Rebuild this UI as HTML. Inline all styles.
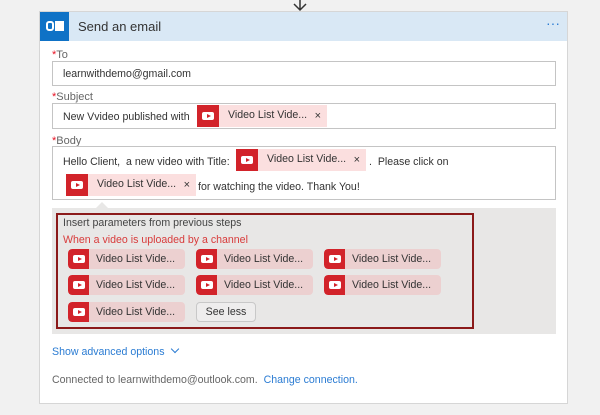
<!DOCTYPE html>
<html><head><meta charset="utf-8"><style>
*{box-sizing:border-box;margin:0;padding:0}
body{width:600px;height:415px;background:#f1f1f1;font-family:"Liberation Sans",sans-serif;position:relative;overflow:hidden;color:#333}
.abs{position:absolute}
.card{left:39px;top:11px;width:529px;height:393px;background:#fff;border:1px solid #d6d6d6}
.hdr{left:0;top:0;width:527px;height:29px;background:#d9e8f5}
.lbl{font-size:11px;color:#666}
.lbl b{color:#e81123;font-weight:normal}
.inp{border:1px solid #c4c4c4;background:#fff;font-size:10.6px;color:#333}
.tok{position:absolute;height:22px;background:#fbdfdf;font-size:10.6px;color:#333;white-space:nowrap}
.yt{position:absolute;left:0;top:0;width:22px;height:22px;background:#d2232a}
.yt:before{content:"";position:absolute;left:5px;top:7px;width:12px;height:8px;background:#fff;border-radius:2px}
.yt:after{content:"";position:absolute;left:10px;top:9px;border-left:4px solid #d2232a;border-top:2px solid transparent;border-bottom:2px solid transparent}
.tok span{position:absolute;left:31px;top:4px}
.tok i{position:absolute;right:6px;top:5px;font-style:normal;font-size:11px}
.pt{position:absolute;width:117px;height:20px;background:#ecd0d0;border-radius:4px;font-size:10.6px;color:#333;overflow:hidden}
.pt .yt{height:20px;width:21px;border-radius:4px 0 0 4px}
.pt .yt:before{top:6px;left:5px}
.pt .yt:after{top:8px}
.pt span{position:absolute;left:28px;top:4px}
</style></head><body>
<svg class="abs" style="left:292px;top:0" width="16" height="12"><path d="M8 0V10M2 4L8 10L14 4" stroke="#333" stroke-width="1.5" fill="none"/></svg>
<div class="abs card">
 <div class="abs hdr"></div>
 <div class="abs" style="left:0;top:0;width:29px;height:29px;background:#0f72c6"></div>
 <div class="abs" style="left:6px;top:9px;width:8px;height:10px;border:2px solid #fff;border-radius:3px"></div>
 <div class="abs" style="left:15px;top:9px;width:9px;height:10px;background:#fff"></div>
 <div class="abs" style="left:38px;top:7px;font-size:13px;color:#333">Send an email</div>
 <div class="abs" style="left:506px;top:3px;font-size:14px;color:#2b7cd3">···</div>
 <div class="abs lbl" style="left:12px;top:37px"><b>*</b>To</div>
 <div class="abs inp" style="left:12px;top:49px;width:504px;height:25px;padding:6px 10px">learnwithdemo@gmail.com</div>
 <div class="abs lbl" style="left:12px;top:79px"><b>*</b>Subject</div>
 <div class="abs inp" style="left:12px;top:91px;width:504px;height:26px">
  <div class="abs" style="left:10px;top:7px">New Vvideo published with</div>
  <div class="tok" style="left:144px;top:1px;width:130px"><div class="yt"></div><span>Video List Vide...</span><i>×</i></div>
 </div>
 <div class="abs lbl" style="left:12px;top:123px"><b>*</b>Body</div>
 <div class="abs inp" style="left:12px;top:134px;width:504px;height:54px">
  <div class="abs" style="left:10px;top:9px;white-space:nowrap">Hello Client,&nbsp; a new video with Title:</div>
  <div class="tok" style="left:183px;top:2px;width:130px"><div class="yt"></div><span>Video List Vide...</span><i>×</i></div>
  <div class="abs" style="left:316px;top:9px;white-space:nowrap">.&nbsp; Please click on</div>
  <div class="tok" style="left:13px;top:27px;width:130px"><div class="yt"></div><span>Video List Vide...</span><i>×</i></div>
  <div class="abs" style="left:145px;top:34px;white-space:nowrap">for watching the video. Thank You!</div>
 </div>
 <div class="abs" style="left:12px;top:196px;width:504px;height:126px;background:#e8e7e6"></div>
 <div class="abs" style="left:56px;top:190px;border-left:6px solid transparent;border-right:6px solid transparent;border-bottom:6px solid #e8e7e6"></div>
 <div class="abs" style="left:16px;top:201px;width:418px;height:116px;border:2px solid #8b1a1a"></div>
 <div class="abs" style="left:23px;top:205px;font-size:10.6px;color:#444">Insert parameters from previous steps</div>
 <div class="abs" style="left:23px;top:222px;font-size:10.6px;color:#d83b3b">When a video is uploaded by a channel</div>
 <div class="pt" style="left:28px;top:237px"><div class="yt"></div><span>Video List Vide...</span></div>
 <div class="pt" style="left:156px;top:237px"><div class="yt"></div><span>Video List Vide...</span></div>
 <div class="pt" style="left:284px;top:237px"><div class="yt"></div><span>Video List Vide...</span></div>
 <div class="pt" style="left:28px;top:263px"><div class="yt"></div><span>Video List Vide...</span></div>
 <div class="pt" style="left:156px;top:263px"><div class="yt"></div><span>Video List Vide...</span></div>
 <div class="pt" style="left:284px;top:263px"><div class="yt"></div><span>Video List Vide...</span></div>
 <div class="pt" style="left:28px;top:290px"><div class="yt"></div><span>Video List Vide...</span></div>
 <div class="abs" style="left:156px;top:290px;width:60px;height:20px;border:1px solid #c8c8c8;border-radius:4px;background:#eeeded;font-size:10.6px;text-align:center;line-height:18px;color:#333">See less</div>
 <div class="abs" style="left:12px;top:334px;font-size:10.6px;color:#2b7cd3">Show advanced options <span style="display:inline-block;width:6px;height:6px;border-right:1px solid #2b7cd3;border-bottom:1px solid #2b7cd3;transform:rotate(45deg);margin:0 0 3px 5px"></span></div>
 <div class="abs" style="left:12px;top:362px;font-size:10.6px;color:#666">Connected to learnwithdemo@outlook.com. &nbsp;<span style="color:#2b7cd3">Change connection.</span></div>
</div>
</body></html>
